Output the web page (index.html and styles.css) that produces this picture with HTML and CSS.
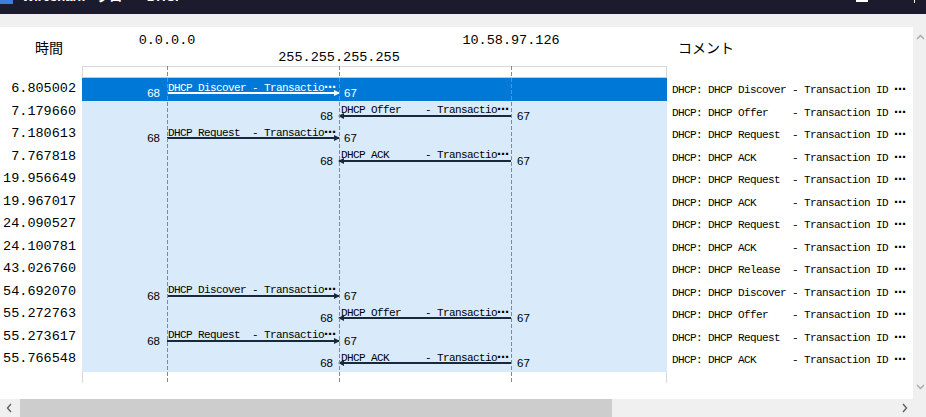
FILE: index.html
```html
<!DOCTYPE html>
<html lang="ja">
<head>
<meta charset="utf-8">
<title>Wireshark · フローグラフ</title>
<link rel="stylesheet" href="styles.css">
</head>
<body>
<div class="titlebar">
  <div class="app-icon"></div>
  <div class="title">Wireshark · フロー · DHCP</div>
  <div class="winbtns">
    <div class="winbtn-min"></div>
    <div class="winbtn-close"></div>
  </div>
</div>
<div class="strip"></div>
<div class="main">
  <div class="panel">
    <div class="head">
      <div class="h-time">時間</div>
      <div class="nodes">
        <span class="node n0">0.0.0.0</span>
        <span class="node n1">255.255.255.255</span>
        <span class="node n2">10.58.97.126</span>
      </div>
      <div class="h-comment">コメント</div>
    </div>
    <div class="flow">
      <div class="frow cap-top"><div></div><div class="cbox"></div><div></div></div>

      <div class="frow"><div class="t">6.805002</div><div class="c sel"><div class="arrow ltr"><span class="lbl">DHCP Discover - Transactio<span class="ell">⋯</span></span><span class="line"></span><span class="hd-r"></span><span class="pl">68</span><span class="pr">67</span></div></div><div class="m">DHCP: DHCP Discover - Transaction ID <span class="ell">⋯</span></div></div>
      <div class="frow"><div class="t">7.179660</div><div class="c"><div class="arrow rtl"><span class="lbl">DHCP Offer    - Transactio<span class="ell">⋯</span></span><span class="line"></span><span class="hd-l"></span><span class="pl">68</span><span class="pr">67</span></div></div><div class="m">DHCP: DHCP Offer    - Transaction ID <span class="ell">⋯</span></div></div>
      <div class="frow"><div class="t">7.180613</div><div class="c"><div class="arrow ltr"><span class="lbl">DHCP Request  - Transactio<span class="ell">⋯</span></span><span class="line"></span><span class="hd-r"></span><span class="pl">68</span><span class="pr">67</span></div></div><div class="m">DHCP: DHCP Request  - Transaction ID <span class="ell">⋯</span></div></div>
      <div class="frow"><div class="t">7.767818</div><div class="c"><div class="arrow rtl"><span class="lbl">DHCP ACK      - Transactio<span class="ell">⋯</span></span><span class="line"></span><span class="hd-l"></span><span class="pl">68</span><span class="pr">67</span></div></div><div class="m">DHCP: DHCP ACK      - Transaction ID <span class="ell">⋯</span></div></div>
      <div class="frow"><div class="t">19.956649</div><div class="c"></div><div class="m">DHCP: DHCP Request  - Transaction ID <span class="ell">⋯</span></div></div>
      <div class="frow"><div class="t">19.967017</div><div class="c"></div><div class="m">DHCP: DHCP ACK      - Transaction ID <span class="ell">⋯</span></div></div>
      <div class="frow"><div class="t">24.090527</div><div class="c"></div><div class="m">DHCP: DHCP Request  - Transaction ID <span class="ell">⋯</span></div></div>
      <div class="frow"><div class="t">24.100781</div><div class="c"></div><div class="m">DHCP: DHCP ACK      - Transaction ID <span class="ell">⋯</span></div></div>
      <div class="frow"><div class="t">43.026760</div><div class="c"></div><div class="m">DHCP: DHCP Release  - Transaction ID <span class="ell">⋯</span></div></div>
      <div class="frow"><div class="t">54.692070</div><div class="c"><div class="arrow ltr"><span class="lbl">DHCP Discover - Transactio<span class="ell">⋯</span></span><span class="line"></span><span class="hd-r"></span><span class="pl">68</span><span class="pr">67</span></div></div><div class="m">DHCP: DHCP Discover - Transaction ID <span class="ell">⋯</span></div></div>
      <div class="frow"><div class="t">55.272763</div><div class="c"><div class="arrow rtl"><span class="lbl">DHCP Offer    - Transactio<span class="ell">⋯</span></span><span class="line"></span><span class="hd-l"></span><span class="pl">68</span><span class="pr">67</span></div></div><div class="m">DHCP: DHCP Offer    - Transaction ID <span class="ell">⋯</span></div></div>
      <div class="frow"><div class="t">55.273617</div><div class="c"><div class="arrow ltr"><span class="lbl">DHCP Request  - Transactio<span class="ell">⋯</span></span><span class="line"></span><span class="hd-r"></span><span class="pl">68</span><span class="pr">67</span></div></div><div class="m">DHCP: DHCP Request  - Transaction ID <span class="ell">⋯</span></div></div>
      <div class="frow"><div class="t">55.766548</div><div class="c"><div class="arrow rtl"><span class="lbl">DHCP ACK      - Transactio<span class="ell">⋯</span></span><span class="line"></span><span class="hd-l"></span><span class="pl">68</span><span class="pr">67</span></div></div><div class="m">DHCP: DHCP ACK      - Transaction ID <span class="ell">⋯</span></div></div>

      <div class="frow cap-bottom"><div></div><div class="cbox"></div><div></div></div>

      <div class="lifeline l0"></div>
      <div class="lifeline l1"></div>
      <div class="lifeline l2"></div>
    </div>
  </div>
  <div class="vscroll">
    <svg class="chev" width="9" height="6" viewBox="0 0 9 6"><polyline points="1,5 4.5,1.5 8,5" fill="none" stroke="#a6a6a6" stroke-width="1.3"/></svg>
    <svg class="chev" width="9" height="6" viewBox="0 0 9 6"><polyline points="1,1 4.5,4.5 8,1" fill="none" stroke="#a6a6a6" stroke-width="1.3"/></svg>
  </div>
</div>
<div class="hscroll">
  <div class="hbtn"><svg width="6" height="10" viewBox="0 0 6 10"><polyline points="5,1 1.5,5 5,9" fill="none" stroke="#606060" stroke-width="1.4"/></svg></div>
  <div class="thumb"></div>
  <div class="hspace"></div>
  <div class="hbtn"><svg width="6" height="10" viewBox="0 0 6 10"><polyline points="1,1 4.5,5 1,9" fill="none" stroke="#606060" stroke-width="1.4"/></svg></div>
  <div class="corner"></div>
</div>
</body>
</html>
```

FILE: styles.css
```css
* { box-sizing: border-box; }
html, body { margin: 0; padding: 0; }
body {
  width: 926px;
  height: 417px;
  overflow: hidden;
  background: #ffffff;
  font-family: "Liberation Sans", "Noto Sans CJK JP", sans-serif;
  color: #000;
}

/* window chrome */
.titlebar {
  height: 14px;
  background: #1c1b2d;
  display: flex;
  align-items: flex-start;
  overflow: hidden;
  color: #fff;
}
.app-icon {
  width: 13px;
  height: 4px;
  background: #3d7fd6;
}
.title {
  font-size: 13px;
  line-height: 14px;
  margin-top: -10px;
  margin-left: 9px;
  font-weight: bold;
  white-space: pre;
}
.winbtns {
  margin-left: auto;
  display: flex;
  gap: 46px;
  margin-right: 11px;
}
.winbtn-min { width: 12px; height: 2px; background: #fff; }
.winbtn-close { width: 1px; height: 3px; background: #fff; }
.strip { height: 13px; background: #f0f0f0; }

.main { display: flex; height: 372px; }
.panel { width: 913px; background: #fff; }
.vscroll {
  width: 13px;
  background: #f0f0f0;
  display: flex;
  flex-direction: column;
  justify-content: space-between;
  align-items: center;
  padding: 7px 0 9px 1px;
}
.chev { display: block; }

.hscroll {
  height: 18px;
  background: #f0f0f0;
  display: flex;
  align-items: stretch;
}
.hbtn {
  width: 17px;
  display: flex;
  align-items: center;
  justify-content: center;
}
.thumb {
  width: 592px;
  margin-left: 3px;
  background: #cdcdcd;
}
.hspace { flex: 1; }
.corner { width: 13px; }

/* header */
.head {
  display: grid;
  grid-template-columns: 82px 585px 1fr;
  height: 39px;
}
.h-time {
  font-family: "Noto Sans CJK JP", sans-serif;
  font-size: 14px;
  line-height: 18px;
  padding-left: 35px;
  padding-top: 11px;
}
.h-comment {
  font-family: "Noto Sans CJK JP", sans-serif;
  font-size: 14px;
  line-height: 18px;
  padding-left: 11px;
  padding-top: 11px;
}
.nodes {
  display: grid;
  grid-template-columns: repeat(3, 172px);
  grid-template-rows: 17px 17px;
  padding-top: 5px;
  margin-left: -1px;
}
.node {
  font-family: "Liberation Mono", monospace;
  font-size: 13.5px;
  line-height: 17px;
  text-align: center;
  white-space: nowrap;
}
.n0 { grid-column: 1; grid-row: 1; }
.n1 { grid-column: 2; grid-row: 2; }
.n2 { grid-column: 3; grid-row: 1; }

/* flow body */
.flow { position: relative; }
.frow {
  display: grid;
  grid-template-columns: 82px 585px 1fr;
  height: 22.5px;
}
.cap-top { height: 12px; }
.cap-top .cbox {
  border: 1px solid #d9d9d9;
  border-bottom: 1px solid #a9cfee;
}
.cap-bottom { height: 12.5px; }
.cap-bottom .cbox {
  border-left: 1px solid #d9d9d9;
  border-right: 1px solid #d9d9d9;
}

.t {
  font-family: "Liberation Mono", monospace;
  font-size: 13.5px;
  line-height: 22.5px;
  text-align: right;
  padding-right: 6px;
  white-space: nowrap;
}
.c {
  background: #d9ebfb;
  position: relative;
}
.c.sel { background: #0078d7; color: #fff; }
.m {
  font-family: "Liberation Mono", monospace;
  font-size: 11px;
  letter-spacing: -0.6px;
  line-height: 22.5px;
  padding-left: 5px;
  white-space: pre;
}
.ell {
  font-family: "DejaVu Sans", sans-serif;
  font-size: 12px;
  font-weight: bold;
  letter-spacing: -0.5px;
}

/* arrows */
.arrow {
  position: absolute;
  top: 0;
  bottom: 0;
  width: 172px;
}
.arrow.ltr { left: 85px; }
.arrow.rtl { left: 257px; }
.lbl {
  position: absolute;
  left: 1px;
  top: 3.5px;
  font-family: "Liberation Mono", monospace;
  font-size: 11px;
  line-height: 11px;
  letter-spacing: -0.6px;
  white-space: pre;
}
.rtl .lbl { left: 2px; }
.line {
  position: absolute;
  left: 0;
  right: 0;
  top: 14px;
  height: 2px;
  background: #17293a;
}
.sel .line { background: #fff; }
.hd-r {
  position: absolute;
  right: -1px;
  top: 12px;
  width: 0;
  height: 0;
  border-left: 6px solid #17293a;
  border-top: 3px solid transparent;
  border-bottom: 3px solid transparent;
}
.hd-l {
  position: absolute;
  left: -1px;
  top: 12px;
  width: 0;
  height: 0;
  border-right: 6px solid #17293a;
  border-top: 3px solid transparent;
  border-bottom: 3px solid transparent;
}
.sel .hd-r { border-left-color: #fff; }
.sel .hd-l { border-right-color: #fff; }
.pl, .pr {
  position: absolute;
  top: 9px;
  font-family: "Liberation Sans", sans-serif;
  font-size: 11.5px;
  line-height: 12px;
  white-space: nowrap;
}
.pl { right: calc(100% + 7px); }
.pr { left: calc(100% + 5px); }
.rtl .pl { right: calc(100% + 6px); }
.rtl .pr { left: calc(100% + 6px); }

/* lifelines */
.lifeline {
  position: absolute;
  top: 0;
  bottom: 0;
  width: 1px;
  background: repeating-linear-gradient(to bottom, #7a8b9c 0 4px, transparent 4px 6px);
}
.l0 { left: 167px; }
.l1 { left: 339px; }
.l2 { left: 511px; }
```
